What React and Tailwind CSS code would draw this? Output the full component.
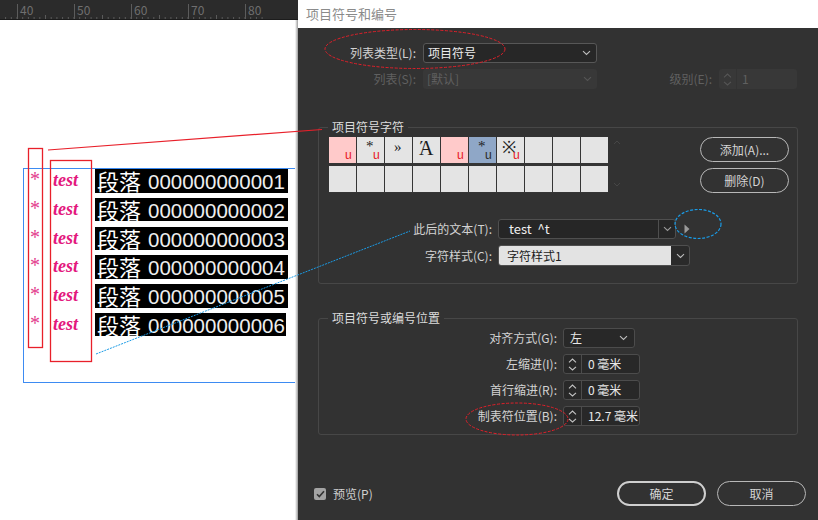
import React from 'react';

const ui = { fontFamily: '"Noto Sans CJK SC", "Noto Sans", sans-serif' };
const serif = { fontFamily: '"Liberation Serif", "DejaVu Serif", serif' };
const sans = { fontFamily: '"Liberation Sans", Arial, sans-serif' };

function Chev({ color = '#bdbdbd' }) {
  return (
    <svg width="9" height="6" viewBox="0 0 9 6">
      <path d="M1 1.2l3.5 3.3L8 1.2" fill="none" stroke={color} strokeWidth="1.1" />
    </svg>
  );
}

function SpinArrows({ color = '#c4c4c4', line = 'border-[#4c4c4c]' }) {
  return (
    <div className={`w-[18px] h-full flex flex-col items-center justify-center gap-[3px] border-r ${line}`}>
      <svg width="9" height="5" viewBox="0 0 9 5">
        <path d="M1 4.3L4.5 1 8 4.3" fill="none" stroke={color} strokeWidth="1.1" />
      </svg>
      <svg width="9" height="5" viewBox="0 0 9 5">
        <path d="M1 0.8L4.5 4 8 0.8" fill="none" stroke={color} strokeWidth="1.1" />
      </svg>
    </div>
  );
}

function Ruler() {
  const minor = [];
  for (let i = 0; i < 54; i++) {
    const x = 17 - 57 + i * 5.7;
    if (x < 0) continue;
    minor.push(<line key={i} x1={x} x2={x} y1={i % 10 === 5 ? 1 : 3} y2="5" stroke="#5a5a5a" strokeWidth="1" />);
  }
  return (
    <div className="h-[20px] bg-[#2b2b2b] border-b border-[#1c1c1c] relative flex" style={ui}>
      <div className="w-[17px] shrink-0" />
      {[40, 50, 60, 70, 80].map(n => (
        <div key={n} className="w-[57px] shrink-0 mt-[4px] border-l border-[#5c5c5c] pl-[2px] text-[12px] leading-[12px] text-[#6f6f6f]">
          {n}
        </div>
      ))}
      <svg className="absolute left-0 bottom-0" width="298" height="5">{minor}</svg>
    </div>
  );
}

const paragraphs = ['000000000001', '000000000002', '000000000003', '000000000004', '000000000005', '000000000006'];

function Canvas() {
  return (
    <div className="flex-1 bg-white flex overflow-hidden">
      <div className="flex-1 overflow-hidden">
        <div className="ml-[23px] mt-[148px] w-[300px] h-[215px] border border-[#3d8bf2]">
          {paragraphs.map((p, i) => (
            <div key={p} className="flex items-start h-[28.8px]">
              <div className="w-[29px] pl-[6px] text-[20px] leading-[20px] text-[#e23b8c]" style={serif}>*</div>
              <div className="w-[42px] text-[18px] leading-[23px] italic font-bold text-[#e3187d]" style={serif}>test</div>
              <div className={`${i === 5 ? 'w-[191px]' : 'w-[193px]'} h-[23.5px] bg-black text-white flex items-start pl-[2px] whitespace-nowrap`}>
                <span className="text-[22px] leading-[22px]" style={ui}>段落</span>
                <span className="ml-[7px] mt-[2px] text-[20.5px] leading-[21px] text-[#eeeeee]" style={sans}>{p}</span>
              </div>
            </div>
          ))}
        </div>
      </div>
      <div className="w-[3px] bg-gradient-to-r from-[#ffffff] to-[#9c9c9c]" />
    </div>
  );
}

const glyphs = [
  { bg: 'bg-[#ffcaca]', u: 'text-[#e8202a]' },
  { g: '*', pos: 'left-[9px] top-[2px] text-[15px]', u: 'text-[#e8202a]' },
  { g: '»', pos: 'left-[9px] top-[3px] text-[15px]' },
  { g: 'Ά', pos: 'left-[6px] top-[1px] text-[20px]' },
  { bg: 'bg-[#ffcaca]', u: 'text-[#e8202a]' },
  { bg: 'bg-[#8fa7c7]', g: '*', pos: 'left-[9px] top-[2px] text-[15px]', u: 'text-[#2d2d2d]' },
  { g: '※', pos: 'left-[5px] top-[2px] text-[17px]', u: 'text-[#e8202a]' },
  {}, {}, {},
  {}, {}, {}, {}, {}, {}, {}, {}, {}, {},
];

function GlyphGrid() {
  return (
    <div className="grid grid-cols-[repeat(10,27px)] gap-px bg-[#353535]">
      {glyphs.map((c, i) => (
        <div key={i} className={`relative h-[26px] ${c.bg || 'bg-[#e4e4e4]'}`}>
          {c.g && <span className={`absolute leading-none text-[#1e1e1e] ${c.pos}`} style={serif}>{c.g}</span>}
          {c.u && <span className={`absolute right-[4px] bottom-[3px] text-[12px] leading-none ${c.u}`} style={ui}>u</span>}
        </div>
      ))}
    </div>
  );
}

function Pill({ children, strong }) {
  return (
    <div className={`w-[89px] h-[25px] rounded-full flex items-center justify-center text-[12px] text-[#d4d4d4] ${strong ? 'border-2 border-[#cfcfcf]' : 'border-[1.5px] border-[#b8b8b8]'}`}>
      {children}
    </div>
  );
}

function Spinner({ value }) {
  return (
    <div className="ml-[6px] w-[77px] h-full rounded-[3px] border border-[#4c4c4c] bg-[#282828] flex items-center">
      <SpinArrows />
      <span className="pl-[6px] text-[#e8e8e8] whitespace-nowrap">{value}</span>
    </div>
  );
}

function Dialog() {
  return (
    <div className="w-[520px] shrink-0 flex flex-col" style={ui}>
      <div className="h-[28px] bg-white flex items-center pl-[8px] text-[13px] text-[#8a8a8a]">项目符号和编号</div>
      <div className="flex-1 bg-[#323232] flex flex-col text-[12px] text-[#d2d2d2]">
        <div className="mt-[15px] h-[20px] flex items-center">
          <div className="w-[118px] text-right">列表类型(L):</div>
          <div className="ml-[7px] w-[174px] h-full rounded-[3px] border border-[#575757] bg-[#272727] flex items-center pl-[4px] pr-[5px] text-[#ececec]">
            <span className="flex-1">项目符号</span>
            <Chev />
          </div>
        </div>

        <div className="mt-[6px] h-[20px] flex items-center text-[#606060]">
          <div className="w-[118px] text-right">列表(S):</div>
          <div className="ml-[7px] w-[174px] h-full rounded-[3px] bg-[#383838] flex items-center pl-[4px] pr-[5px]">
            <span className="flex-1">[默认]</span>
            <Chev color="#555555" />
          </div>
          <div className="w-[115px] text-right">级别(E):</div>
          <div className="ml-[7px] w-[78px] h-full rounded-[3px] bg-[#383838] flex items-center">
            <SpinArrows color="#555555" line="border-[#333333]" />
            <span className="pl-[5px]">1</span>
          </div>
        </div>

        <div className="mx-[20px] mt-[38px] h-[157px] relative border border-[#474747] rounded-[3px]">
          <div className="absolute left-[9px] -top-[9px] px-[4px] bg-[#323232] leading-[16px] text-[#dcdcdc]">项目符号字符</div>
          <div className="flex pt-[9px] pl-[10px] pr-[8px]">
            <GlyphGrid />
            <div className="ml-[5px] h-[53px] flex flex-col justify-between py-[3px]">
              <svg width="8" height="5" viewBox="0 0 8 5"><path d="M1 4L4 1l3 3" fill="none" stroke="#464646" /></svg>
              <svg width="8" height="5" viewBox="0 0 8 5"><path d="M1 1l3 3 3-3" fill="none" stroke="#464646" /></svg>
            </div>
            <div className="ml-auto flex flex-col gap-[6px]">
              <Pill>添加(A)...</Pill>
              <Pill>删除(D)</Pill>
            </div>
          </div>
          <div className="mt-[26px] h-[20px] flex items-center">
            <div className="w-[173px] text-right">此后的文本(T):</div>
            <div className="ml-[6px] w-[178px] h-full rounded-[3px] border border-[#4f4f4f] bg-[#262626] flex items-center">
              <span className="flex-1 pl-[10px] text-[#f0f0f0] text-[13px] whitespace-pre">test  ^t</span>
              <div className="w-[17px] h-full border-l border-[#4f4f4f] flex items-center justify-center"><Chev color="#9a9a9a" /></div>
            </div>
            <svg className="ml-[8px]" width="6" height="10" viewBox="0 0 6 10"><path d="M0.5 0.5L5.5 5 0.5 9.5z" fill="#9a9a9a" /></svg>
          </div>
          <div className="mt-[6px] h-[21px] flex items-center">
            <div className="w-[173px] text-right">字符样式(C):</div>
            <div className="ml-[6px] w-[192px] h-full rounded-[3px] border border-[#4f4f4f] bg-[#2a2a2a] flex items-stretch overflow-hidden">
              <span className="flex-1 bg-[#e3e3e3] pl-[8px] flex items-center text-[#1c1c1c]">字符样式1</span>
              <div className="w-[18px] flex items-center justify-center"><Chev /></div>
            </div>
          </div>
        </div>

        <div className="mx-[20px] mt-[34px] h-[117px] relative border border-[#474747] rounded-[3px]">
          <div className="absolute left-[9px] -top-[9px] px-[4px] bg-[#323232] leading-[16px] text-[#dcdcdc]">项目符号或编号位置</div>
          <div className="pt-[9px] flex flex-col gap-[6px]">
            <div className="h-[20px] flex items-center">
              <div className="w-[238px] text-right">对齐方式(G):</div>
              <div className="ml-[6px] w-[72px] h-full rounded-[3px] border border-[#4c4c4c] bg-[#282828] flex items-center pl-[6px] pr-[6px] text-[#e8e8e8]">
                <span className="flex-1">左</span>
                <Chev />
              </div>
            </div>
            <div className="h-[20px] flex items-center">
              <div className="w-[238px] text-right">左缩进(I):</div>
              <Spinner value="0 毫米" />
            </div>
            <div className="h-[20px] flex items-center">
              <div className="w-[238px] text-right">首行缩进(R):</div>
              <Spinner value="0 毫米" />
            </div>
            <div className="h-[20px] flex items-center">
              <div className="w-[238px] text-right">制表符位置(B):</div>
              <Spinner value="12.7 毫米" />
            </div>
          </div>
        </div>

        <div className="mt-auto mb-[14px] h-[25px] flex items-center pl-[16px] pr-[12px]">
          <div className="w-[12px] h-[12px] rounded-[2px] bg-[#a3a3a3] flex items-center justify-center">
            <svg width="9" height="8" viewBox="0 0 9 8"><path d="M1 4.2l2.3 2.3L8 1.2" fill="none" stroke="#333333" strokeWidth="1.6" /></svg>
          </div>
          <span className="ml-[7px] text-[#cfcfcf]">预览(P)</span>
          <div className="ml-auto flex gap-[11px]">
            <Pill strong>确定</Pill>
            <Pill>取消</Pill>
          </div>
        </div>
      </div>
    </div>
  );
}

export default function App() {
  return (
    <div className="w-[818px] h-[520px] relative overflow-hidden flex">
      <div className="w-[298px] shrink-0 flex flex-col">
        <Ruler />
        <Canvas />
      </div>
      <Dialog />
      <svg className="absolute inset-0 pointer-events-none" width="818" height="520">
        <rect x="28.5" y="148.5" width="14" height="199" fill="none" stroke="#e8202a" strokeWidth="1.3" />
        <rect x="50.5" y="160.5" width="41" height="201" fill="none" stroke="#e8202a" strokeWidth="1.3" />
        <line x1="48" y1="150" x2="322" y2="129.5" stroke="#e8202a" strokeWidth="1.2" />
        <line x1="96" y1="354" x2="410" y2="231" stroke="#1a9be6" strokeWidth="1" strokeDasharray="2 1" />
        <ellipse cx="415" cy="49" rx="90" ry="19.5" fill="none" stroke="#e0202a" strokeWidth="1" strokeDasharray="3 1.5" />
        <ellipse cx="698" cy="224" rx="23" ry="14.5" fill="none" stroke="#1a9be6" strokeWidth="1.2" strokeDasharray="3 1.5" />
        <ellipse cx="517" cy="419" rx="51" ry="16" fill="none" stroke="#e0202a" strokeWidth="1" strokeDasharray="3 1.5" />
      </svg>
    </div>
  );
}
